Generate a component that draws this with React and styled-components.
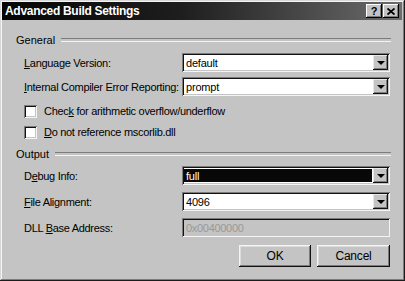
import React from 'react';
import styled, { createGlobalStyle } from 'styled-components';

const Global = createGlobalStyle`
    html, body { margin: 0; padding: 0; background: #1a1a1a; }
    body { font-family: "Liberation Sans", Arial, sans-serif; font-size: 11px; color: #000; }
`

const Window = styled.div`
    width: 405px;
    height: 281px;
    box-sizing: border-box;
    background: #c4c4c4;
    padding: 2px 3px 3px 2px;
    box-shadow: inset -1px -1px #1c1c1c, inset 1px 1px #d8d8d8, inset -2px -2px #7c7c7c, inset 2px 2px #f4f4f4;
    display: flex;
    flex-direction: column;
`

const TitleBar = styled.div`
    height: 18px;
    display: flex;
    align-items: center;
    background: linear-gradient(to right, #050505 0%, #1e1e1e 45%, #6c6c6c 100%);
    padding: 0 3px 0 3px;
`

const Title = styled.div`
    flex: 1;
    color: #fff;
    font-weight: bold;
    font-size: 12px;
    letter-spacing: -0.3px;
`

const CaptionButton = styled.div`
    width: 16px;
    height: 14px;
    box-sizing: border-box;
    background: #c4c4c4;
    box-shadow: inset -1px -1px #000, inset 1px 1px #fff, inset -2px -2px #7c7c7c;
    display: flex;
    align-items: center;
    justify-content: center;
    margin-left: ${p => p.$gap || 0}px;
    font-weight: bold;
    font-size: 11px;
    line-height: 1;
`

const Content = styled.div`
    display: flex;
    flex-direction: column;
    padding: 0 13px 0 14px;
`

const GroupHeader = styled.div`
    display: flex;
    align-items: center;
    height: 14px;
    margin-top: ${p => p.$top}px;
    gap: 6px;
`

const GroupLine = styled.div`
    flex: 1;
    height: 2px;
    margin-right: -2px;
    border-top: 1px solid #7c7c7c;
    border-bottom: 1px solid #f4f4f4;
`

const FieldRow = styled.div`
    display: grid;
    grid-template-columns: 158px 208px;
    align-items: center;
    height: 19px;
    margin-top: ${p => p.$top}px;
    padding-left: 8px;
`

const Label = styled.span`
    color: #000;
    letter-spacing: -0.3px;
    white-space: nowrap;
`

const Key = styled.span`
    text-decoration: underline;
`

const Combo = styled.div`
    height: 19px;
    box-sizing: border-box;
    display: flex;
    align-items: stretch;
    background: #fff;
    padding: 2px;
    box-shadow: inset 1px 1px #7c7c7c, inset -1px -1px #f4f4f4, inset 2px 2px #111, inset -2px -2px #c4c4c4;
`

const ComboText = styled.div`
    flex: 1;
    display: flex;
    align-items: center;
    padding-left: 2px;
    background: ${p => (p.$selected ? '#080808' : 'transparent')};
    color: ${p => (p.$selected ? '#fff' : '#000')};
    margin: ${p => (p.$selected ? '1px 1px 1px 0' : '0')};
    letter-spacing: -0.2px;
`

const DropButton = styled.div`
    width: 15px;
    box-sizing: border-box;
    background: #c4c4c4;
    box-shadow: inset -1px -1px #111, inset 1px 1px #e8e8e8, inset -2px -2px #7c7c7c;
    display: flex;
    align-items: center;
    justify-content: center;
`

const Arrow = styled.div`
    width: 0;
    height: 0;
    border-left: 4px solid transparent;
    border-right: 4px solid transparent;
    border-top: 4px solid #000;
    margin-top: 1px;
`

const TextBox = styled.div`
    height: 19px;
    box-sizing: border-box;
    display: flex;
    align-items: center;
    padding-left: 4px;
    background: #c4c4c4;
    color: #999;
    letter-spacing: -0.3px;
    box-shadow: inset 1px 1px #7c7c7c, inset -1px -1px #f4f4f4, inset 2px 2px #111, inset -2px -2px #c4c4c4;
`

const CheckRow = styled.label`
    display: flex;
    align-items: center;
    gap: 7px;
    height: 14px;
    margin-top: ${p => p.$top}px;
    padding-left: 8px;
`

const CheckBox = styled.div`
    width: 13px;
    height: 13px;
    box-sizing: border-box;
    background: #fff;
    box-shadow: inset 1px 1px #7c7c7c, inset -1px -1px #f4f4f4, inset 2px 2px #111, inset -2px -2px #c4c4c4;
`

const ButtonRow = styled.div`
    display: flex;
    justify-content: flex-end;
    gap: 6px;
    margin-top: 8px;
    margin-right: -1px;
`

const Button = styled.div`
    width: ${p => p.$w}px;
    height: 22px;
    box-sizing: border-box;
    display: flex;
    align-items: center;
    justify-content: center;
    background: #c4c4c4;
    box-shadow: inset -1px -1px #111, inset 1px 1px #f4f4f4, inset -2px -2px #7c7c7c, inset 2px 2px #dcdcdc;
    letter-spacing: -0.2px;
    font-size: 12px;
`

const Combobox = ({ value, selected }) => (
    <Combo>
        <ComboText $selected={selected}>{value}</ComboText>
        <DropButton><Arrow /></DropButton>
    </Combo>
)

const App = () => {
    return (
        <>
            <Global />
            <Window>
                <TitleBar>
                    <Title>Advanced Build Settings</Title>
                    <CaptionButton>?</CaptionButton>
                    <CaptionButton $gap={1}>
                        <svg width="8" height="7" viewBox="0 0 8 7">
                            <path d="M0.5 0.5 L7.5 6.5 M7.5 0.5 L0.5 6.5" stroke="#000" strokeWidth="1.8" />
                        </svg>
                    </CaptionButton>
                </TitleBar>
                <Content>
                    <GroupHeader $top={13}>
                        <span>General</span>
                        <GroupLine />
                    </GroupHeader>
                    <FieldRow $top={6}>
                        <Label><Key>L</Key>anguage Version:</Label>
                        <Combobox value="default" />
                    </FieldRow>
                    <FieldRow $top={5}>
                        <Label><Key>I</Key>nternal Compiler Error Reporting:</Label>
                        <Combobox value="prompt" />
                    </FieldRow>
                    <CheckRow $top={8}>
                        <CheckBox />
                        <Label>Chec<Key>k</Key> for arithmetic overflow/underflow</Label>
                    </CheckRow>
                    <CheckRow $top={7}>
                        <CheckBox />
                        <Label><Key>D</Key>o not reference mscorlib.dll</Label>
                    </CheckRow>
                    <GroupHeader $top={8}>
                        <span>Output</span>
                        <GroupLine />
                    </GroupHeader>
                    <FieldRow $top={5}>
                        <Label>D<Key>e</Key>bug Info:</Label>
                        <Combobox value="full" selected />
                    </FieldRow>
                    <FieldRow $top={7}>
                        <Label><Key>F</Key>ile Alignment:</Label>
                        <Combobox value="4096" />
                    </FieldRow>
                    <FieldRow $top={7}>
                        <Label>DLL <Key>B</Key>ase Address:</Label>
                        <TextBox>0x00400000</TextBox>
                    </FieldRow>
                    <ButtonRow>
                        <Button $w={72}>OK</Button>
                        <Button $w={73}>Cancel</Button>
                    </ButtonRow>
                </Content>
            </Window>
        </>
    )
}

export default App;
